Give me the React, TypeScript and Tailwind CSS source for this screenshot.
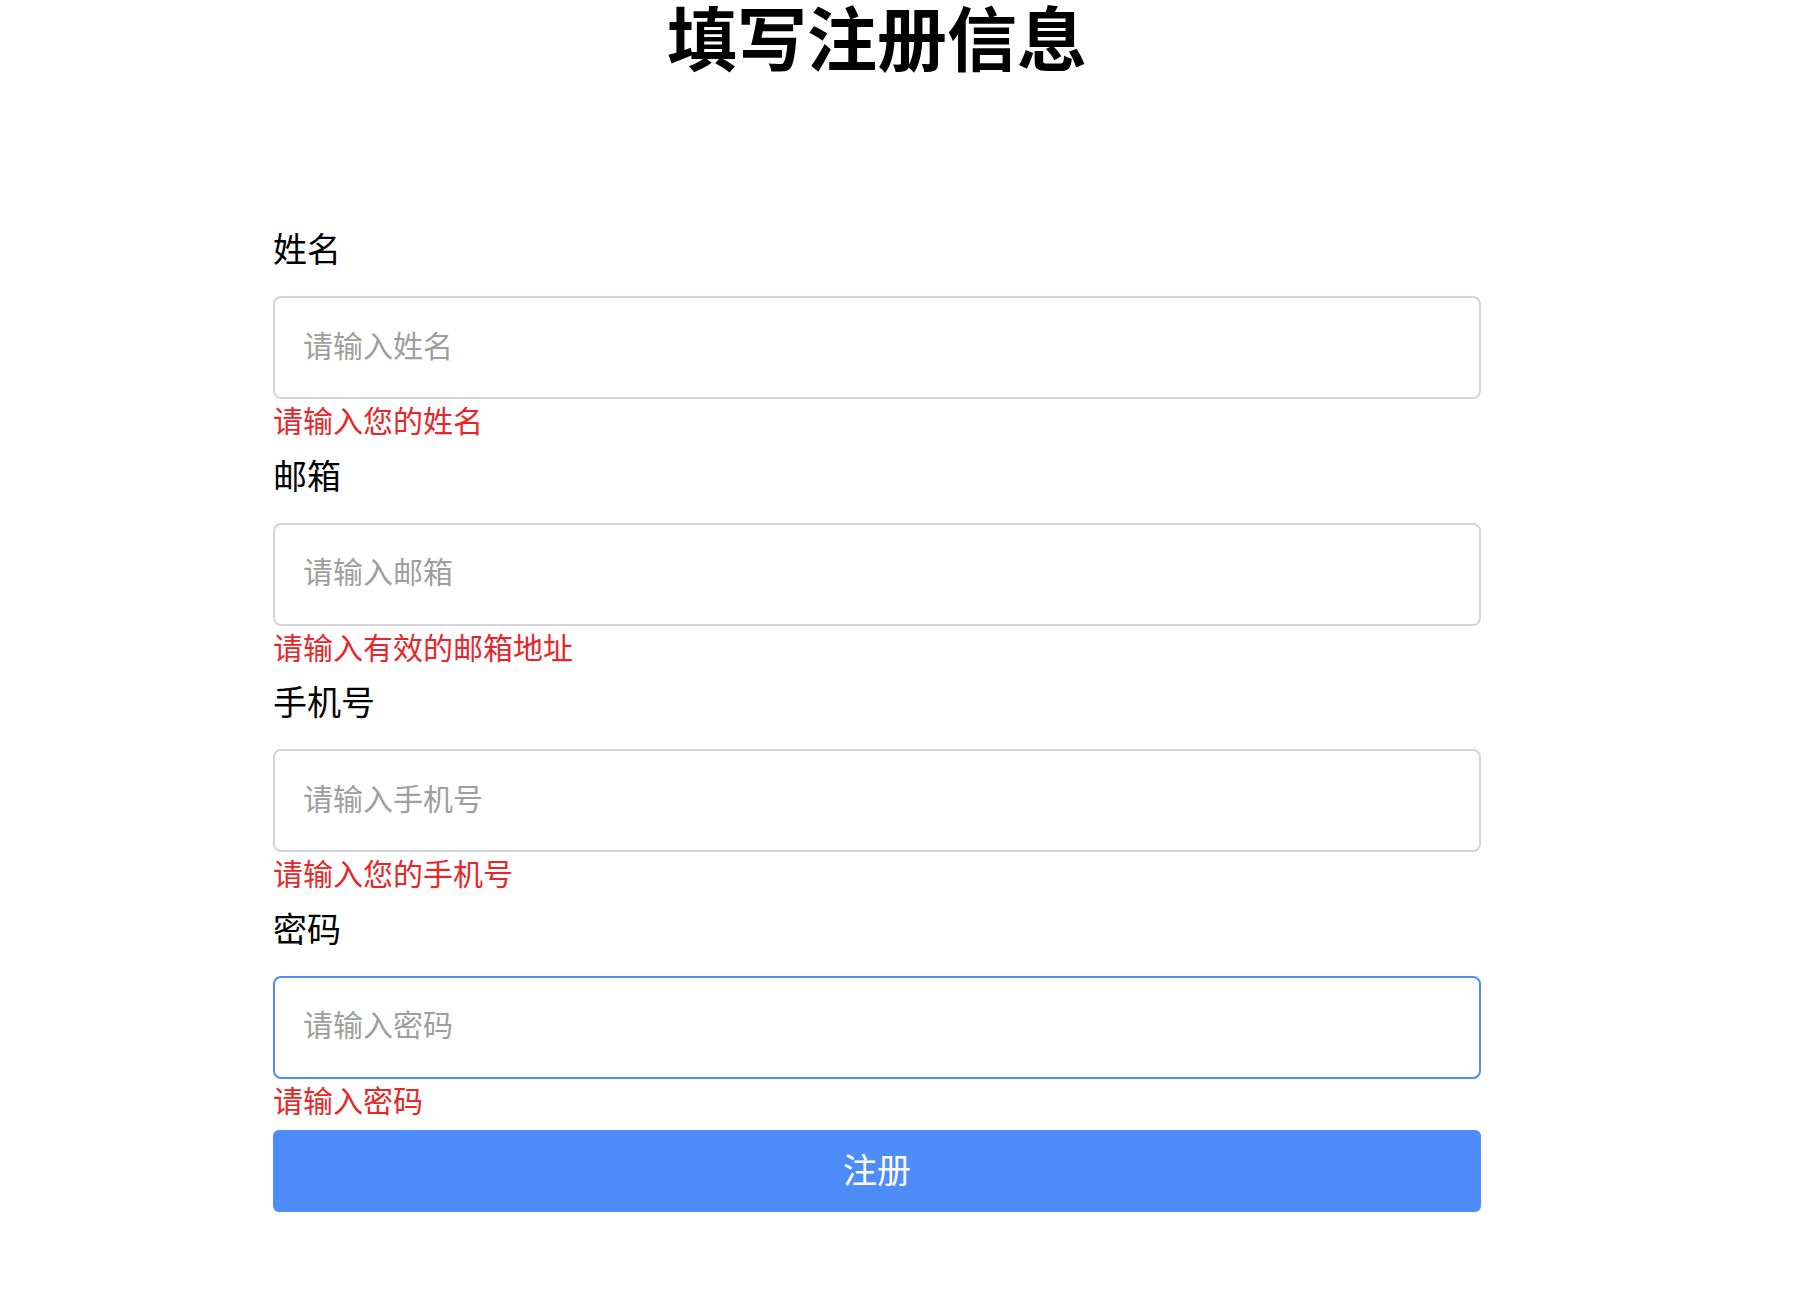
import React from "react";

const fields = [
  { label: "姓名", placeholder: "请输入姓名", error: "请输入您的姓名", type: "text" },
  { label: "邮箱", placeholder: "请输入邮箱", error: "请输入有效的邮箱地址", type: "email" },
  { label: "手机号", placeholder: "请输入手机号", error: "请输入您的手机号", type: "tel" },
  { label: "密码", placeholder: "请输入密码", error: "请输入密码", type: "password", focused: true },
];

export default function App() {
  return (
    <div
      className="min-h-screen bg-white text-black"
      style={{ fontFamily: '"Noto Sans CJK SC", "Noto Sans", sans-serif' }}
    >
      <div className="pl-[273px]">
        <div className="w-[1208px]">
          <h1 className="text-center text-[70px] font-bold leading-none m-0 pt-[1px]">填写注册信息</h1>
          <form className="mt-[153px]" onSubmit={(e) => e.preventDefault()}>
            {fields.map((f) => (
              <div key={f.label} className="mb-[8px]">
                <label className="block text-[34px] leading-[48px]">{f.label}</label>
                <input
                  type={f.type === "password" ? "text" : f.type}
                  placeholder={f.placeholder}
                  className={
                    f.focused
                      ? "mt-[24px] block w-full h-[103px] rounded-[8px] border-2 border-[#4e8df7] pl-[28px] pr-[28px] pb-[8px] text-[30px] outline-none placeholder:text-[#9e9e9e]"
                      : "mt-[24px] block w-full h-[103px] rounded-[8px] border-2 border-[#d1d5db] pl-[28px] pr-[28px] pb-[8px] text-[30px] outline-none placeholder:text-[#9e9e9e]"
                  }
                />
                <div className="text-[30px] leading-[40px] pb-[3.5px] text-[#e8262a]">{f.error}</div>
              </div>
            ))}
            <button
              type="submit"
              className="block w-full h-[82px] rounded-[6px] bg-[#4e8cf9] text-white text-[34px] pb-[6px] mt-[1px]"
            >
              注册
            </button>
          </form>
        </div>
      </div>
    </div>
  );
}
